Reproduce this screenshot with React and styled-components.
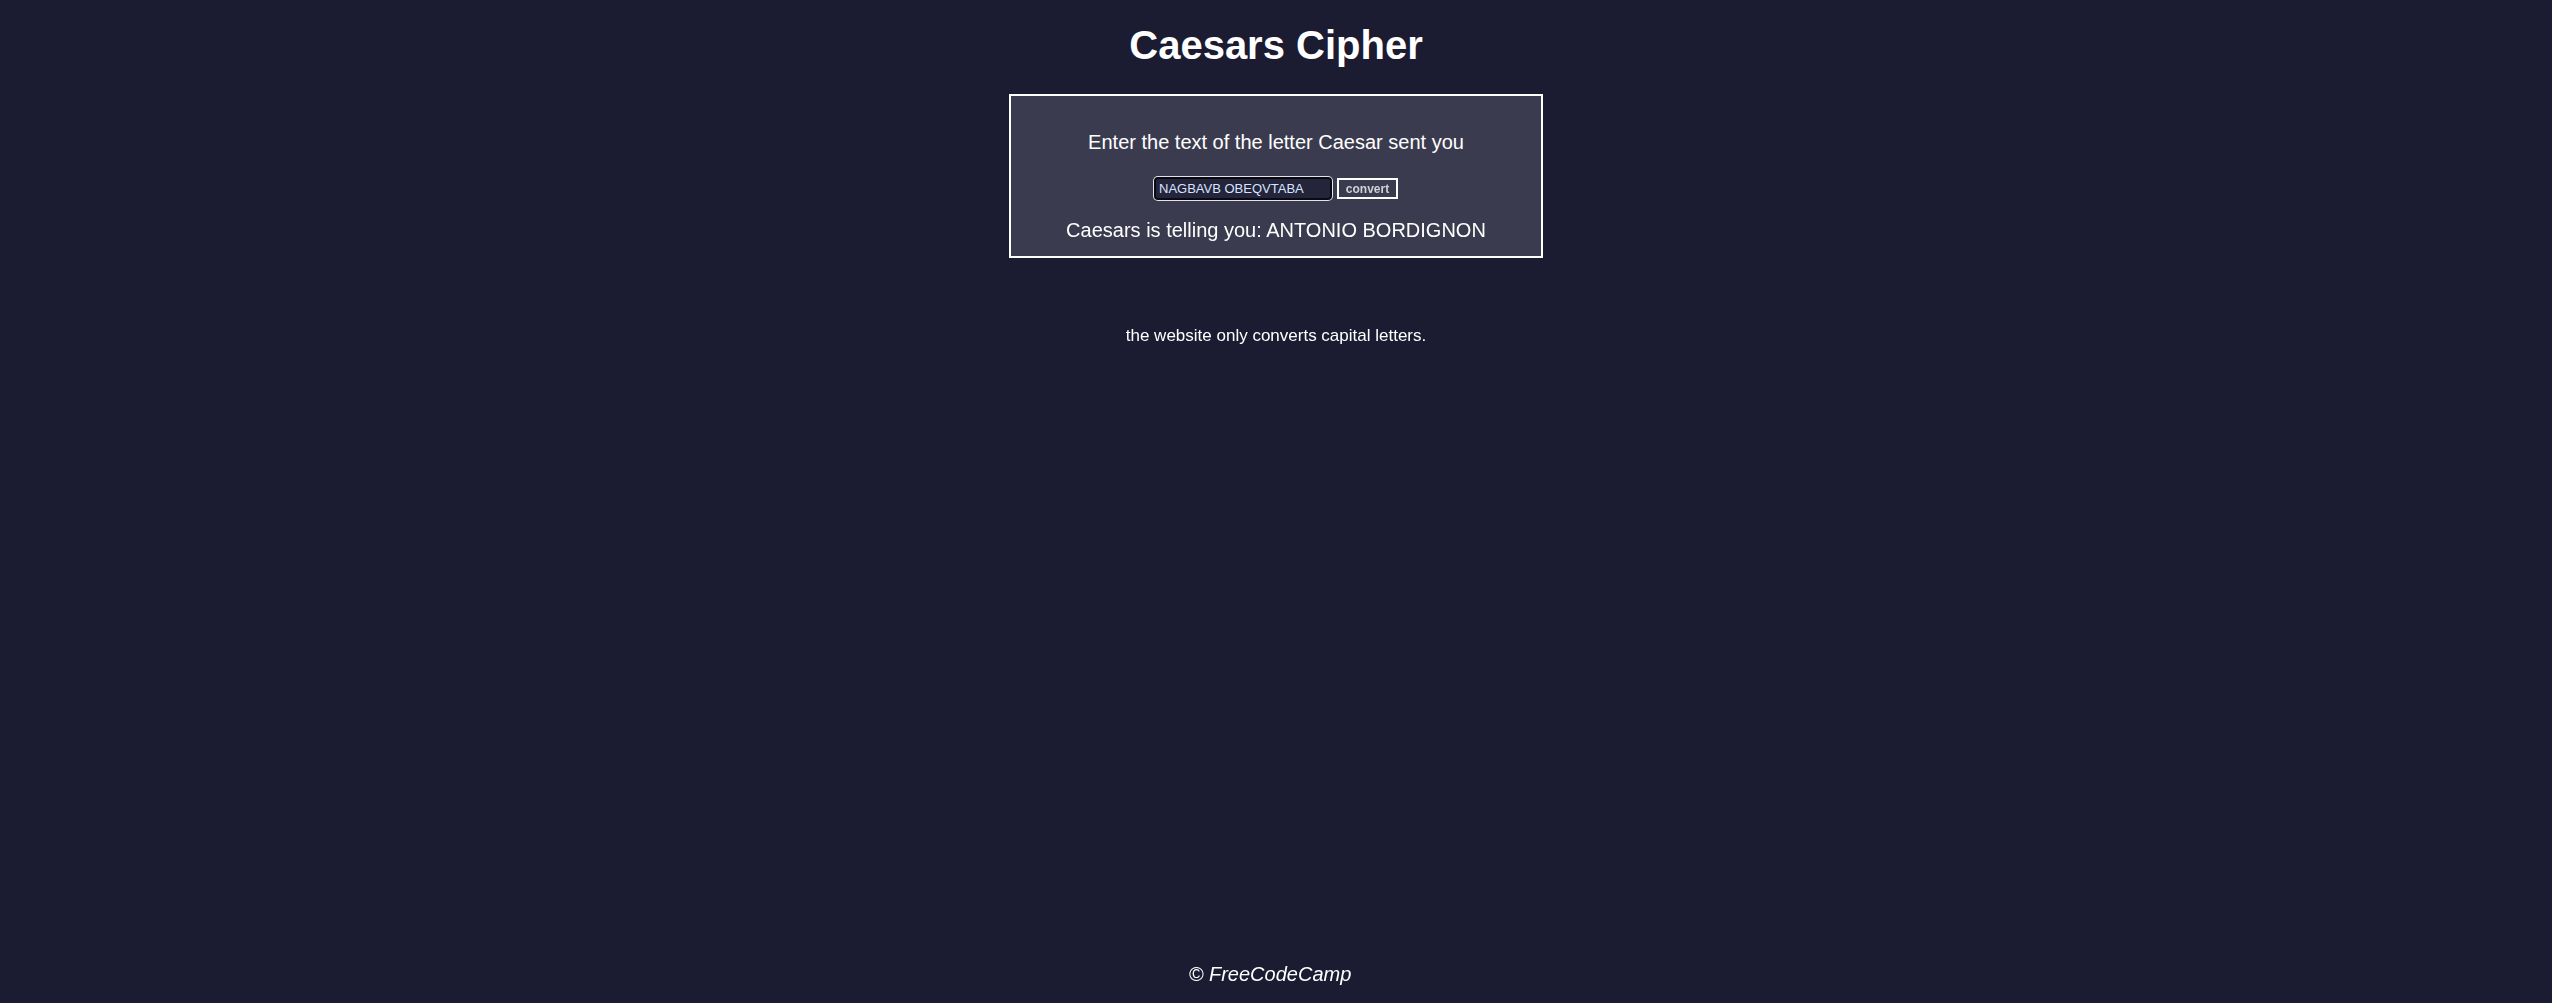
import React, { useState } from "react";
import styled, { createGlobalStyle } from "styled-components";

const GlobalStyle = createGlobalStyle`
  html, body {
    margin: 0;
    padding: 0;
    background: #1b1b32;
  }
  body {
    font-family: "Liberation Sans", Arial, sans-serif;
    color: #ffffff;
  }
`;

const Page = styled.div`
  min-height: 100vh;
  display: flex;
  flex-direction: column;
  align-items: center;
  box-sizing: border-box;
  padding-bottom: 17px;
`;

const Title = styled.h1`
  margin: 22px 0 0;
  font-size: 40px;
  font-weight: bold;
  line-height: 46px;
  color: #ffffff;
`;

const Card = styled.section`
  margin-top: 26px;
  width: 534px;
  box-sizing: border-box;
  border: 2px solid #ffffff;
  background: #3b3b4f;
  padding: 35px 0 14px;
  display: flex;
  flex-direction: column;
  align-items: center;
`;

const Prompt = styled.p`
  margin: 0;
  font-size: 20px;
  line-height: 23px;
`;

const Form = styled.form`
  margin-top: 23px;
  display: flex;
  align-items: center;
  gap: 5px;
`;

const TextInput = styled.input`
  width: 178px;
  height: 23px;
  box-sizing: border-box;
  padding: 0 3px;
  font-family: "Liberation Sans", Arial, sans-serif;
  font-size: 13px;
  color: #d6e4ff;
  background: #24243a;
  border: 2px solid #0a0a14;
  border-radius: 4px;
  box-shadow: 0 0 0 1px #e4e4e8;
  outline: none;
  caret-color: #ffffff;
`;

const ConvertButton = styled.button`
  width: 61px;
  height: 21px;
  box-sizing: border-box;
  padding: 0;
  font-family: "Liberation Sans", Arial, sans-serif;
  font-size: 12px;
  font-weight: bold;
  color: #d0d0d5;
  background: #3b3b4f;
  border: 2px solid #ffffff;
  cursor: pointer;
`;

const Result = styled.p`
  margin: 19px 0 0;
  font-size: 20px;
  line-height: 23px;
`;

const Note = styled.p`
  margin: 68px 0 0;
  font-size: 17px;
  line-height: 20px;
`;

const Footer = styled.footer`
  margin-top: auto;
  padding-right: 12px;
  font-size: 20px;
  line-height: 23px;
  font-style: italic;
`;

function decode(str) {
  return str.replace(/[A-Z]/g, (c) =>
    String.fromCharCode(((c.charCodeAt(0) - 65 + 13) % 26) + 65)
  );
}

export default function App() {
  const [text, setText] = useState("NAGBAVB OBEQVTABA");
  const [result, setResult] = useState(decode("NAGBAVB OBEQVTABA"));

  return (
    <>
      <GlobalStyle />
      <Page>
        <Title>Caesars Cipher</Title>
        <Card>
          <Prompt>Enter the text of the letter Caesar sent you</Prompt>
          <Form
            onSubmit={(e) => {
              e.preventDefault();
              setResult(decode(text));
            }}
          >
            <TextInput
              autoFocus
              value={text}
              onChange={(e) => setText(e.target.value)}
            />
            <ConvertButton type="submit">convert</ConvertButton>
          </Form>
          <Result>Caesars is telling you: {result}</Result>
        </Card>
        <Note>the website only converts capital letters.</Note>
        <Footer>© FreeCodeCamp</Footer>
      </Page>
    </>
  );
}
